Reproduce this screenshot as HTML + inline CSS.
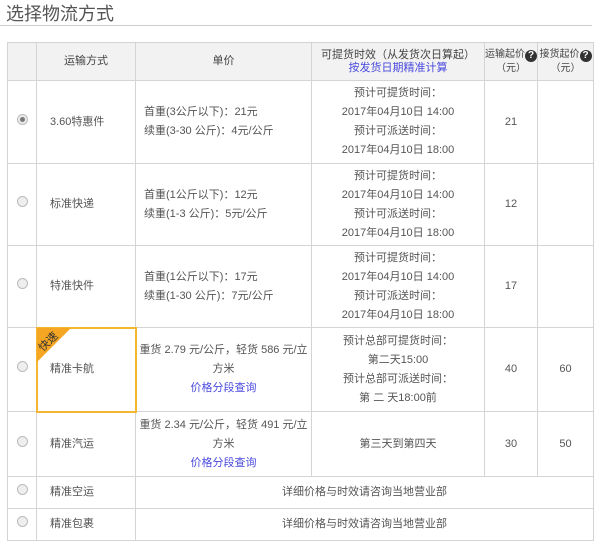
<!DOCTYPE html>
<html><head><meta charset="utf-8"><style>
body{margin:0;background:#fff;font-family:"Liberation Sans","Noto Sans CJK SC",sans-serif;color:#555;}
.title{position:absolute;left:6px;top:0px;font-size:18px;color:#555;}
.line{position:absolute;left:0;top:25px;width:592px;height:1px;background:#ccc;}
table{position:absolute;left:7px;top:42px;border-collapse:collapse;font-size:11px;table-layout:fixed;width:586px;}
td,th{border:1px solid #d4d4d4;text-align:center;vertical-align:middle;line-height:19px;padding:0;}
th{background:#f2f2f2;font-weight:normal;color:#444;height:37px;line-height:13px;white-space:nowrap;overflow:hidden;}
.l{text-align:left;padding-left:13px;}
.lp{text-align:left;padding-left:8px;}
.radio{display:inline-block;width:9px;height:9px;border-radius:50%;border:1px solid #bbb;background:#eee;}
.radio.on{background:radial-gradient(circle,#777 0 2px,#eee 3px);}
a{color:#4a4adf;text-decoration:none;}
.q{display:inline-block;width:12px;height:12px;border-radius:50%;background:#333;color:#fff;font-size:10px;line-height:12px;font-weight:bold;vertical-align:-1px;}
.hl{position:relative;outline:2px solid #f5b731;outline-offset:-1px;}
.tag{position:absolute;left:0;top:0;width:0;height:0;border-top:34px solid #f5a623;border-right:34px solid transparent;}
.tagt{position:absolute;left:1px;top:5px;font-size:11px;color:#333;transform:rotate(-45deg);}
.pr{padding:0 2px;}
</style></head><body>
<div class="title">选择物流方式</div>
<div class="line"></div>
<table>
<colgroup><col style="width:29px"><col style="width:99px"><col style="width:176px"><col style="width:173px"><col style="width:53px"><col style="width:56px"></colgroup>
<tr><th></th><th>运输方式</th><th>单价</th><th>可提货时效（从发货次日算起）<br><a>按发货日期精准计算</a></th><th style="font-size:10px">运输起价<span class="q">?</span><br>（元）</th><th style="font-size:10px">接货起价<span class="q">?</span><br>（元）</th></tr>
<tr style="height:83px"><td><span class="radio on"></span></td><td class="l">3.60特惠件</td><td class="lp">首重(3公斤以下)：21元<br>续重(3-30 公斤)：4元/公斤</td><td>预计可提货时间：<br>2017年04月10日 14:00<br>预计可派送时间：<br>2017年04月10日 18:00</td><td>21</td><td></td></tr>
<tr style="height:82px"><td><span class="radio"></span></td><td class="l">标准快递</td><td class="lp">首重(1公斤以下)：12元<br>续重(1-3 公斤)：5元/公斤</td><td>预计可提货时间：<br>2017年04月10日 14:00<br>预计可派送时间：<br>2017年04月10日 18:00</td><td>12</td><td></td></tr>
<tr style="height:82px"><td><span class="radio"></span></td><td class="l">特准快件</td><td class="lp">首重(1公斤以下)：17元<br>续重(1-30 公斤)：7元/公斤</td><td>预计可提货时间：<br>2017年04月10日 14:00<br>预计可派送时间：<br>2017年04月10日 18:00</td><td>17</td><td></td></tr>
<tr style="height:84px"><td><span class="radio"></span></td><td class="l hl"><div class="tag"></div><div class="tagt">快速</div>精准卡航</td><td class="pr">重货 2.79 元/公斤，轻货 586 元/立方米<br><a>价格分段查询</a></td><td>预计总部可提货时间：<br>第二天15:00<br>预计总部可派送时间：<br>第 二 天18:00前</td><td>40</td><td>60</td></tr>
<tr style="height:65px"><td><span class="radio"></span></td><td class="l">精准汽运</td><td class="pr">重货 2.34 元/公斤，轻货 491 元/立方米<br><a>价格分段查询</a></td><td>第三天到第四天</td><td>30</td><td>50</td></tr>
<tr style="height:32px"><td><span class="radio"></span></td><td class="l">精准空运</td><td colspan="4">详细价格与时效请咨询当地营业部</td></tr>
<tr style="height:32px"><td><span class="radio"></span></td><td class="l">精准包裹</td><td colspan="4">详细价格与时效请咨询当地营业部</td></tr>
</table>
</body></html>
